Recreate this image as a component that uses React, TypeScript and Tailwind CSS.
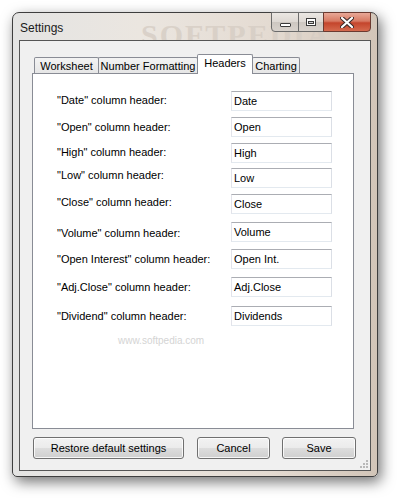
import React from "react";

const rows = [
  { label: '"Date" column header:', value: "Date", mt: "mt-[17px]", lc: "-translate-y-[1px]" },
  { label: '"Open" column header:', value: "Open", mt: "mt-[6px]", lc: "" },
  { label: '"High" column header:', value: "High", mt: "mt-[6px]", lc: "-translate-y-[1px]" },
  { label: '"Low" column header:', value: "Low", mt: "mt-[5px]", lc: "-translate-y-[3px]" },
  { label: '"Close" column header:', value: "Close", mt: "mt-[6px]", lc: "-translate-y-[2px]" },
  { label: '"Volume" column header:', value: "Volume", mt: "mt-[8px]", lc: "translate-y-[1px]" },
  { label: '"Open Interest" column header:', value: "Open Int.", mt: "mt-[7px]", lc: "" },
  { label: '"Adj.Close" column header:', value: "Adj.Close", mt: "mt-[8px]", lc: "" },
  { label: '"Dividend" column header:', value: "Dividends", mt: "mt-[9px]", lc: "" },
];

function Tab({ label, w, selected }: { label: string; w: string; selected?: boolean }) {
  if (selected) {
    return (
      <div
        className={`${w} h-[20px] -mb-px -ml-px relative z-10 bg-white border border-b-0 border-[#898c95] rounded-t-[2px] flex items-start justify-center pt-[1px] text-[11px] leading-[14px] text-black`}
      >
        {label}
      </div>
    );
  }
  return (
    <div
      className={`${w} h-[16px] -ml-px first:ml-0 border border-b-0 border-[#898c95] rounded-t-[2px] bg-[linear-gradient(#f3f3f3,#e6e6e6)] flex items-center justify-center pt-[1px] text-[11px] leading-[14px] text-black`}
    >
      {label}
    </div>
  );
}

function Button({ label, w, cls }: { label: string; w: string; cls?: string }) {
  return (
    <div
      className={`${w} ${cls ?? ""} h-[22px] rounded-[3px] border border-[#707070] bg-[linear-gradient(#f2f2f2_0%,#ebebeb_50%,#dddddd_50%,#cfcfcf_100%)] shadow-[inset_0_0_0_1px_rgba(255,255,255,0.8)] flex items-center justify-center text-[11px] text-black`}
    >
      {label}
    </div>
  );
}

export default function App() {
  return (
    <div
      className="w-[398px] h-[502px] bg-white pt-[12px] pl-[12px] overflow-hidden"
      style={{ fontFamily: '"Liberation Sans", Arial, sans-serif' }}
    >
      <div className="relative w-[366px] h-[465px] rounded-t-[7px] rounded-b-[5px] border border-[#3e3e3e] bg-[linear-gradient(90deg,#e4e4e3_0%,#ebe6e0_35%,#e4dbd2_70%,#d2c5b8_100%)] shadow-[3px_5px_14px_rgba(0,0,0,0.55)] pt-[27px] px-[6px] pb-[5px]">
        {/* title watermark */}
        <div
          className="absolute left-[128px] top-[4px] text-[30px] leading-[36px] tracking-[2px] text-[#d6cdc4] opacity-80 select-none"
          style={{ fontFamily: '"Liberation Serif", serif', fontWeight: 700 }}
        >
          SOFTPEDIA
        </div>
        {/* title */}
        <div className="absolute left-[7px] top-[8px] text-[12px] leading-[15px] text-[#1a1a1a]">Settings</div>

        {/* caption buttons */}
        <div className="absolute -top-px right-[6px] flex h-[20px]">
          <div className="w-[28px] h-full border border-[#6b6b6b] rounded-bl-[4px] bg-[linear-gradient(#ebe7e3_0%,#ddd8d3_50%,#cdc7c1_51%,#d8d2cc_100%)] flex items-center justify-center">
            <div className="w-[11px] h-[4px] mt-[5px] bg-white border border-[#3a3a3a] rounded-[1px]" />
          </div>
          <div className="w-[26px] h-full -ml-px border border-[#6b6b6b] bg-[linear-gradient(#ebe7e3_0%,#ddd8d3_50%,#cdc7c1_51%,#d8d2cc_100%)] flex items-center justify-center">
            <div className="w-[10px] h-[8px] border border-[#3a3a3a] bg-white flex items-center justify-center">
              <div className="w-[6px] h-[3px] mt-[1px] border border-[#3a3a3a] bg-[#cfcfcf]" />
            </div>
          </div>
          <div className="w-[48px] h-full -ml-px border border-[#6b3a30] rounded-br-[4px] bg-[linear-gradient(#e8a897_0%,#d77a63_45%,#c4452c_55%,#d56a4e_100%)] flex items-center justify-center">
            <svg width="14" height="11" viewBox="0 0 14 11">
              <path
                d="M2 1 L12 10 M12 1 L2 10"
                stroke="#3a2a28"
                strokeWidth="4.2"
                strokeLinecap="round"
              />
              <path d="M2 1 L12 10 M12 1 L2 10" stroke="#ffffff" strokeWidth="2.2" strokeLinecap="round" />
            </svg>
          </div>
        </div>

        {/* client area */}
        <div className="relative w-[352px] h-[431px] border border-[#555] bg-[#f0f0f0]">
          {/* tabs */}
          <div className="flex items-end h-[19px] mt-[13px] ml-[14px]">
            <Tab label="Worksheet" w="w-[65px]" />
            <Tab label="Number Formatting" w="w-[100px]" />
            <Tab label="Headers" w="w-[56px]" selected />
            <Tab label="Charting" w="w-[48px]" />
          </div>
          {/* panel */}
          <div className="relative ml-[12px] w-[322px] h-[356px] border border-[#898c95] bg-white pl-[24px]">
            {rows.map((r) => (
              <div key={r.label} className={`flex items-center h-[20px] ${r.mt}`}>
                <div className={`w-[174px] text-[11px] leading-[13px] text-black whitespace-nowrap ${r.lc}`}>
                  {r.label}
                </div>
                <div className="w-[101px] h-[20px] border border-[#abadb3] border-l-[#e2e3ea] border-r-[#dbdfe6] border-b-[#e3e9ef] bg-white pl-[2px] flex items-center text-[11px] text-black">
                  {r.value}
                </div>
              </div>
            ))}
            {/* content watermark */}
            <div className="absolute left-[85px] top-[261px] text-[10px] leading-[12px] text-[#d4d4d4] select-none">
              www.softpedia.com
            </div>
          </div>
          {/* buttons */}
          <div className="flex mt-[8px] ml-[13px]">
            <Button label="Restore default settings" w="w-[151px]" />
            <Button label="Cancel" w="w-[73px]" cls="ml-[13px]" />
            <Button label="Save" w="w-[74px]" cls="ml-[12px]" />
          </div>
          {/* grip */}
          <svg className="absolute right-[2px] bottom-[2px]" width="8" height="8" viewBox="0 0 8 8">
            {[
              [6, 0],
              [6, 3],
              [3, 3],
              [6, 6],
              [3, 6],
              [0, 6],
            ].map(([x, y]) => (
              <rect key={`${x}-${y}`} x={x} y={y} width="2" height="2" fill="#b8b8b8" />
            ))}
          </svg>
        </div>
      </div>
    </div>
  );
}
